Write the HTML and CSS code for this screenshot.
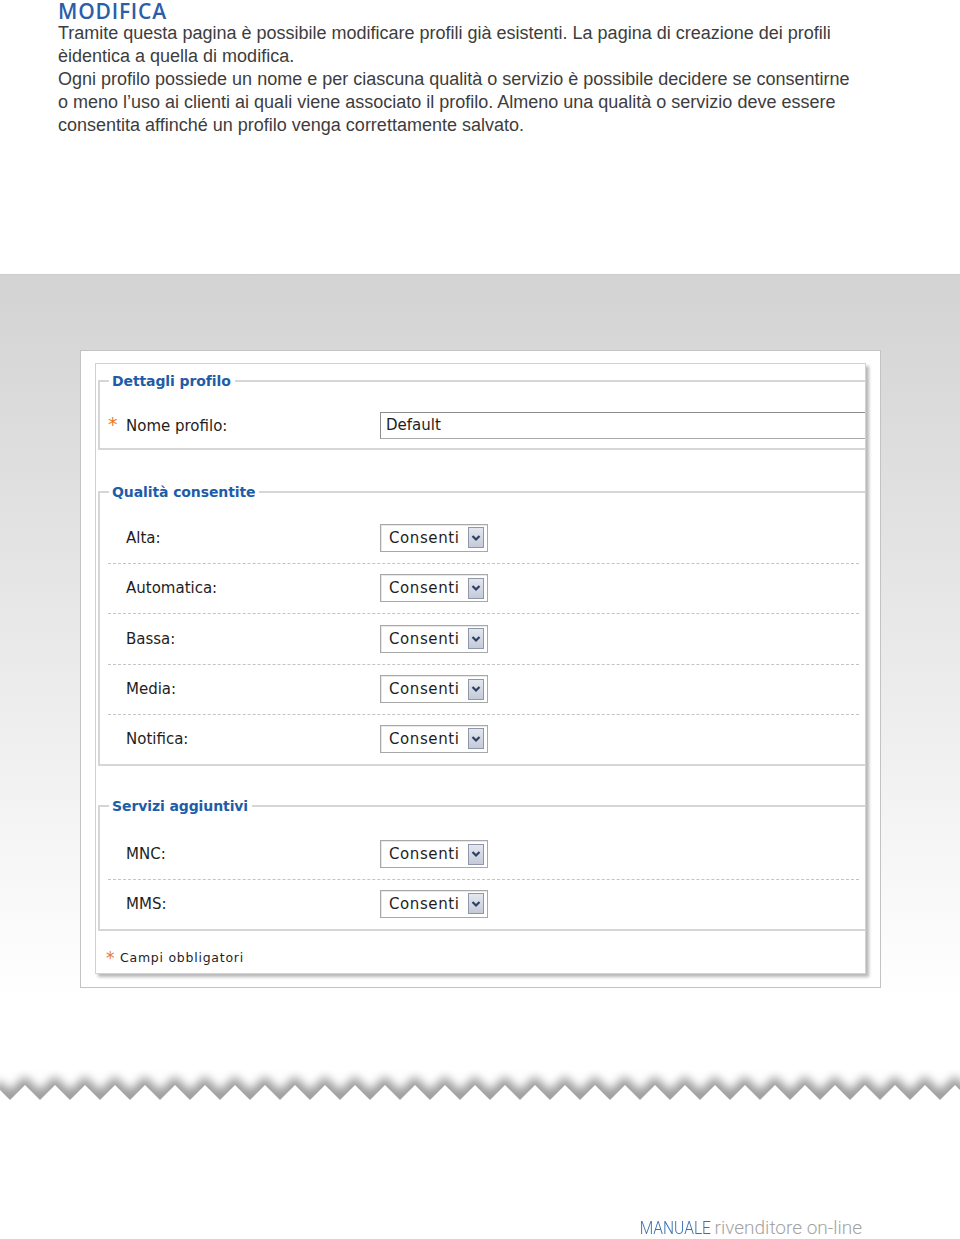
FILE: index.html
```html
<!DOCTYPE html>
<html lang="it">
<head>
<meta charset="utf-8">
<title>Modifica profilo</title>
<link rel="stylesheet" href="styles.css">
</head>
<body>
<header class="intro">
  <h1 class="title">MODIFICA</h1>
  <p class="text">Tramite questa pagina è possibile modificare profili già esistenti. La pagina di creazione dei profili<br>èidentica a quella di modifica.</p>
  <p class="text">Ogni profilo possiede un nome e per ciascuna qualità o servizio è possibile decidere se consentirne<br>o meno l’uso ai clienti ai quali viene associato il profilo. Almeno una qualità o servizio deve essere<br>consentita affinché un profilo venga correttamente salvato.</p>
</header>

<section class="band">
  <div class="frame">
    <form class="panel">
      <fieldset class="group group-details">
        <legend>Dettagli profilo</legend>
        <div class="row row-name">
          <span class="label"><span class="mark">*</span>Nome profilo:</span>
          <span class="input">Default</span>
        </div>
      </fieldset>

      <fieldset class="group group-quality">
        <legend>Qualità consentite</legend>
        <div class="row"><span class="label"><span class="mark"></span>Alta:</span><span class="select"><span class="value">Consenti</span><span class="arrow"><svg viewBox="0 0 14 18" width="14" height="18"><path d="M3.5 7 L7 10.5 L10.5 7" fill="none" stroke="#2d3f63" stroke-width="2.2"/></svg></span></span></div>
        <div class="row"><span class="label"><span class="mark"></span>Automatica:</span><span class="select"><span class="value">Consenti</span><span class="arrow"><svg viewBox="0 0 14 18" width="14" height="18"><path d="M3.5 7 L7 10.5 L10.5 7" fill="none" stroke="#2d3f63" stroke-width="2.2"/></svg></span></span></div>
        <div class="row"><span class="label"><span class="mark"></span>Bassa:</span><span class="select"><span class="value">Consenti</span><span class="arrow"><svg viewBox="0 0 14 18" width="14" height="18"><path d="M3.5 7 L7 10.5 L10.5 7" fill="none" stroke="#2d3f63" stroke-width="2.2"/></svg></span></span></div>
        <div class="row"><span class="label"><span class="mark"></span>Media:</span><span class="select"><span class="value">Consenti</span><span class="arrow"><svg viewBox="0 0 14 18" width="14" height="18"><path d="M3.5 7 L7 10.5 L10.5 7" fill="none" stroke="#2d3f63" stroke-width="2.2"/></svg></span></span></div>
        <div class="row"><span class="label"><span class="mark"></span>Notifica:</span><span class="select"><span class="value">Consenti</span><span class="arrow"><svg viewBox="0 0 14 18" width="14" height="18"><path d="M3.5 7 L7 10.5 L10.5 7" fill="none" stroke="#2d3f63" stroke-width="2.2"/></svg></span></span></div>
      </fieldset>

      <fieldset class="group group-services">
        <legend>Servizi aggiuntivi</legend>
        <div class="row"><span class="label"><span class="mark"></span>MNC:</span><span class="select"><span class="value">Consenti</span><span class="arrow"><svg viewBox="0 0 14 18" width="14" height="18"><path d="M3.5 7 L7 10.5 L10.5 7" fill="none" stroke="#2d3f63" stroke-width="2.2"/></svg></span></span></div>
        <div class="row"><span class="label"><span class="mark"></span>MMS:</span><span class="select"><span class="value">Consenti</span><span class="arrow"><svg viewBox="0 0 14 18" width="14" height="18"><path d="M3.5 7 L7 10.5 L10.5 7" fill="none" stroke="#2d3f63" stroke-width="2.2"/></svg></span></span></div>
      </fieldset>

      <p class="footnote"><span class="mark">*</span>Campi obbligatori</p>
    </form>
  </div>
</section>

<div class="zigzag">
  <svg viewBox="0 0 960 40" width="960" height="40" aria-hidden="true">
    <defs>
      <clipPath id="above">
        <path d="M-5 0 V15 l15 15 l15 -15 l15 15 l15 -15 l15 15 l15 -15 l15 15 l15 -15 l15 15 l15 -15 l15 15 l15 -15 l15 15 l15 -15 l15 15 l15 -15 l15 15 l15 -15 l15 15 l15 -15 l15 15 l15 -15 l15 15 l15 -15 l15 15 l15 -15 l15 15 l15 -15 l15 15 l15 -15 l15 15 l15 -15 l15 15 l15 -15 l15 15 l15 -15 l15 15 l15 -15 l15 15 l15 -15 l15 15 l15 -15 l15 15 l15 -15 l15 15 l15 -15 l15 15 l15 -15 l15 15 l15 -15 l15 15 l15 -15 l15 15 l15 -15 l15 15 l15 -15 l15 15 l15 -15 l15 15 l15 -15 l15 15 l15 -15 l15 15 l15 -15 l15 15 l15 -15 l15 15 l15 -15 l15 15 l15 -15 l15 15 l15 -15 l15 15 l15 -15 l15 15 l15 -15 l15 15 l15 -15 l15 15 l15 -15 l15 15 l15 -15 V0 Z"/>
      </clipPath>
      <filter id="soft" x="-5%" y="-100%" width="110%" height="300%">
        <feGaussianBlur stdDeviation="5"/>
      </filter>
    </defs>
    <g clip-path="url(#above)">
      <path filter="url(#soft)" fill="none" stroke="#9a9a9a" stroke-width="13" d="M-5 15 l15 15 l15 -15 l15 15 l15 -15 l15 15 l15 -15 l15 15 l15 -15 l15 15 l15 -15 l15 15 l15 -15 l15 15 l15 -15 l15 15 l15 -15 l15 15 l15 -15 l15 15 l15 -15 l15 15 l15 -15 l15 15 l15 -15 l15 15 l15 -15 l15 15 l15 -15 l15 15 l15 -15 l15 15 l15 -15 l15 15 l15 -15 l15 15 l15 -15 l15 15 l15 -15 l15 15 l15 -15 l15 15 l15 -15 l15 15 l15 -15 l15 15 l15 -15 l15 15 l15 -15 l15 15 l15 -15 l15 15 l15 -15 l15 15 l15 -15 l15 15 l15 -15 l15 15 l15 -15 l15 15 l15 -15 l15 15 l15 -15 l15 15 l15 -15 l15 15 l15 -15 l15 15 l15 -15 l15 15 l15 -15 l15 15 l15 -15 l15 15 l15 -15 l15 15 l15 -15 l15 15 l15 -15"/>
    </g>
  </svg>
</div>

<footer class="footer">
  <span class="brand">MANUALE</span> <span class="sub">rivenditore on-line</span>
</footer>
</body>
</html>
```

FILE: styles.css
```css
html, body {
  margin: 0;
  padding: 0;
  background: #ffffff;
}

body {
  width: 960px;
  font-family: "Liberation Sans", Arial, sans-serif;
}

.intro {
  padding-left: 58px;
}

.title {
  margin: 0;
  font-family: "Open Sans", "Liberation Sans", sans-serif;
  font-weight: 600;
  font-size: 21px;
  line-height: 22px;
  letter-spacing: 0.8px;
  color: #2c5ea8;
}

.text {
  margin: 0;
  font-size: 18px;
  line-height: 23px;
  letter-spacing: 0;
  color: #3d3d3d;
}

.band {
  margin-top: 137px;
  height: 726px;
  padding-top: 75px;
  box-sizing: border-box;
  border-top: 1px solid #cdcdcd;
  background: linear-gradient(#d3d3d3, #ffffff);
}

.frame {
  margin-left: 80px;
  width: 801px;
  box-sizing: border-box;
  padding: 12px 14px 13px 14px;
  border: 1px solid #c3c3c3;
  background: #ffffff;
}

.panel {
  margin: 0;
  border: 1px solid #d2d2d2;
  background: #fff;
  box-shadow: 3px 3px 3px rgba(0, 0, 0, 0.28);
  overflow: hidden;
  padding: 0 0 8px 2px;
  font-family: "DejaVu Sans", Verdana, sans-serif;
  color: #222;
}

.group {
  margin: 0 -20px 0 0;
  padding: 0 0 0 8px;
  border: 2px solid #d6d6d6;
  min-width: 0;
}

.group legend {
  margin-left: 1px;
  padding: 0 4px 0 3px;
  font-weight: bold;
  font-size: 14px;
  line-height: 16px;
  letter-spacing: -0.1px;
  color: #1f5ca8;
}

.group-details { margin-top: 9px; }
.group-quality { margin-top: 34px; padding-top: 13px; }
.group-services { margin-top: 32px; padding-top: 16px; }

.row {
  display: flex;
  align-items: center;
  height: 50.5px;
  box-sizing: border-box;
  margin-right: 24px;
  border-bottom: 1px dashed #c4c4c4;
}

.row:last-child {
  border-bottom: 0;
  height: 48.5px;
  padding-bottom: 1px;
}

.row-name,
.row-name:last-child {
  height: auto;
  padding: 23px 0 9px;
  margin-right: 0;
}

.label {
  display: flex;
  align-items: center;
  width: 272px;
  flex: none;
  font-size: 15px;
  color: #1e1e1e;
}

.mark {
  width: 18px;
  flex: none;
  align-self: flex-start;
  font-size: 19px;
  line-height: 14px;
  color: #e57a2c;
}

.input {
  flex: none;
  width: 520px;
  height: 27px;
  box-sizing: border-box;
  padding-left: 5px;
  border: 1px solid #a9a9a9;
  border-top-color: #8d8d8d;
  border-left-color: #8d8d8d;
  font-size: 15px;
  line-height: 25px;
  color: #1e1e1e;
}

.select {
  flex: none;
  display: flex;
  align-items: center;
  justify-content: space-between;
  width: 108px;
  height: 28px;
  box-sizing: border-box;
  padding: 0 3px 0 8px;
  border: 1px solid #a8a8a8;
  box-shadow: inset 1px 1px 0 #e8e8e8;
  background: #fff;
}

.value {
  font-size: 15px;
  letter-spacing: 0.6px;
  color: #1e1e1e;
}

.arrow {
  display: flex;
  align-items: center;
  justify-content: center;
  width: 16px;
  height: 21px;
  box-sizing: border-box;
  border: 1px solid #8f98ab;
  background: linear-gradient(#e3e7ef, #c4cad8);
}

.arrow svg {
  display: block;
}

.footnote {
  margin: 20px 0 0;
  padding-left: 8px;
  display: flex;
  align-items: center;
  font-size: 12.5px;
  line-height: 14px;
  letter-spacing: 0.75px;
  color: #1e1e1e;
}

.footnote .mark {
  width: 14px;
  font-size: 17px;
}

.zigzag {
  margin-top: 70px;
  height: 40px;
}

.zigzag svg {
  display: block;
}

.footer {
  margin-top: 110px;
  padding-right: 98px;
  text-align: right;
  font-family: "Roboto", "Liberation Sans", sans-serif;
  font-weight: 300;
  font-size: 19px;
  line-height: 16px;
}

.brand {
  display: inline-block;
  transform: scaleX(0.82);
  transform-origin: right center;
  margin-right: -1px;
  color: #3a70b3;
}

.sub {
  letter-spacing: 0;
  color: #a3a3a3;
}
```
